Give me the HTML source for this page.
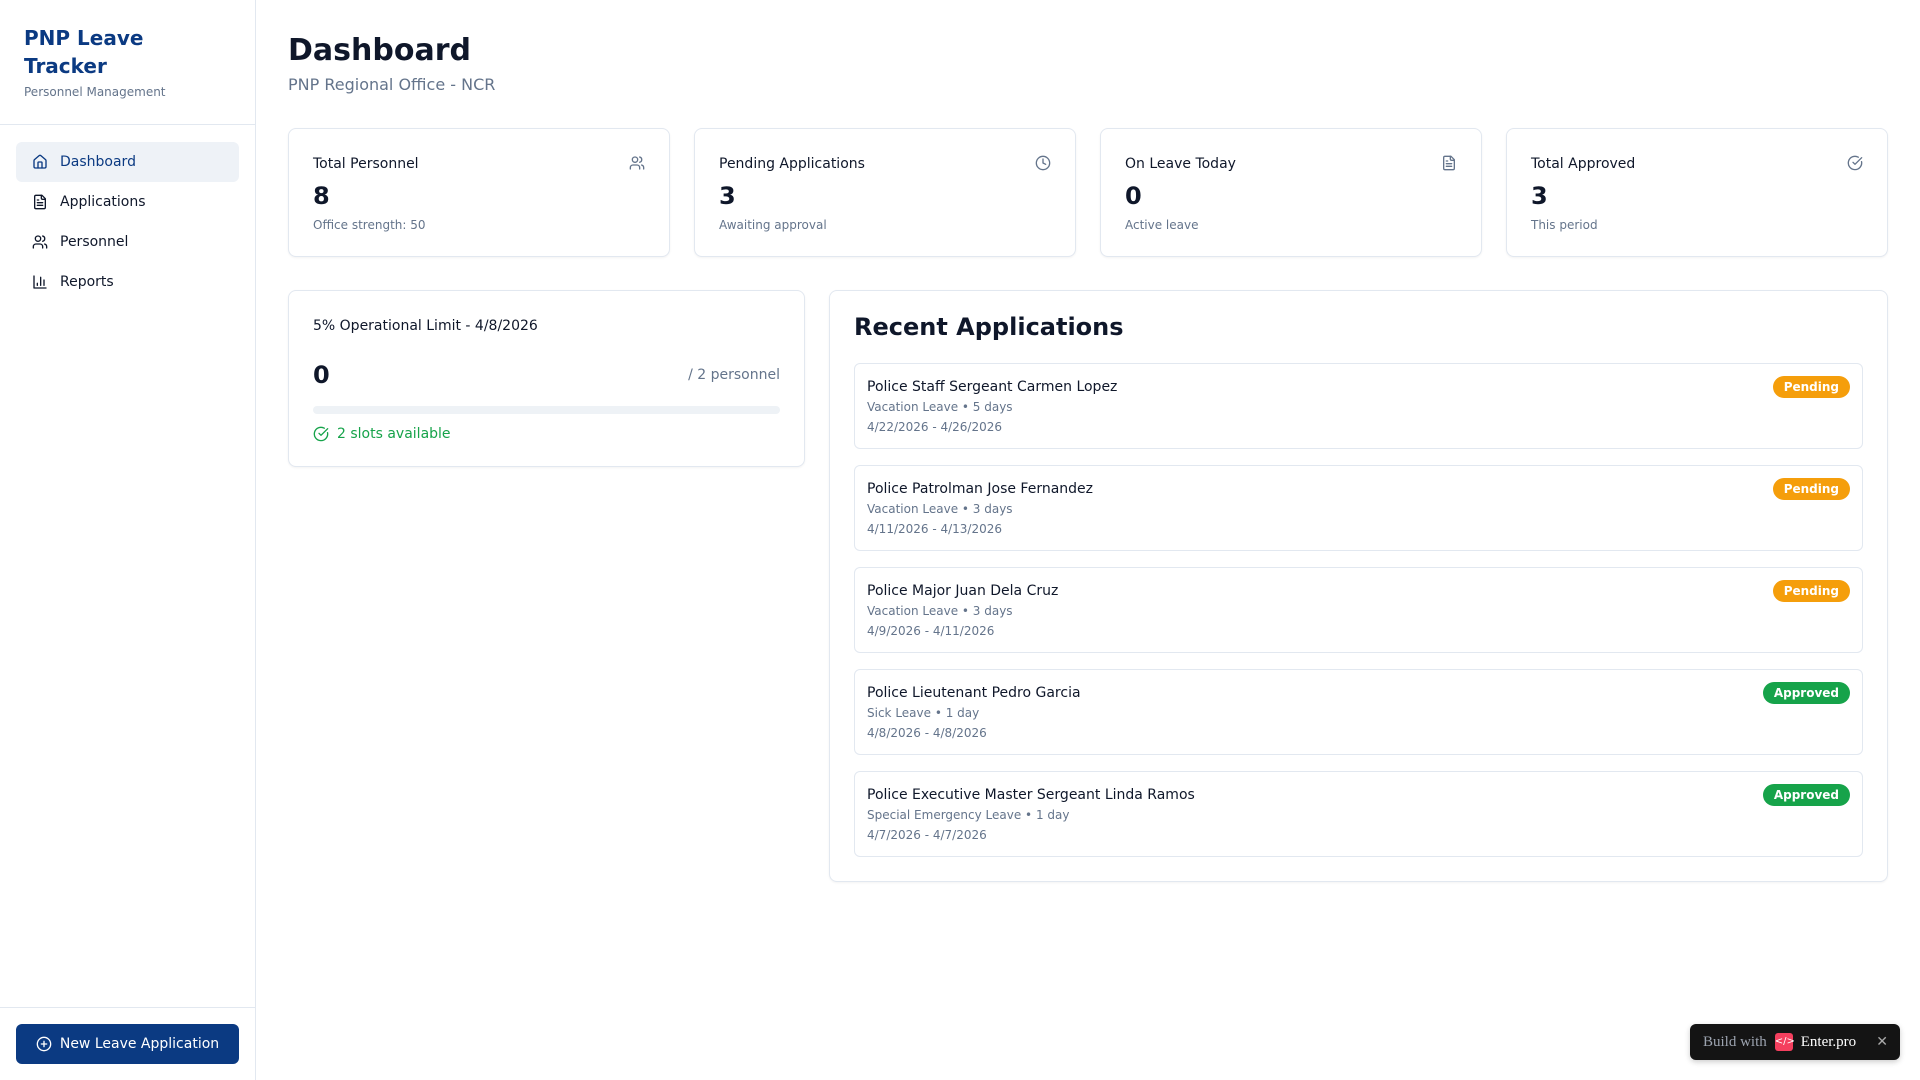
<!DOCTYPE html>
<html><head><meta charset="utf-8"><style>
*{box-sizing:border-box;margin:0;padding:0}
body{width:1920px;height:1080px;font-family:"DejaVu Sans","Liberation Sans",sans-serif;background:#fff;color:#0f172a;position:relative;overflow:hidden}
.side{position:absolute;left:0;top:0;width:256px;height:1080px;border-right:1px solid #e2e8f0}
.brand{padding:24px 24px 0;height:125px;border-bottom:1px solid #e2e8f0}
.brand h1{font-size:20px;line-height:28px;color:#0b3a82;font-weight:bold}
.brand p{font-size:12px;color:#64748b;margin-top:5px}
.nav{padding:16px;padding-top:17px}
.nav a{display:flex;align-items:center;height:40px;padding:0 16px;font-size:14px;color:#0f172a;border-radius:6px;gap:12px;text-decoration:none}
.nav a.act{background:#eef2f7;color:#0b3a82}
.nav svg{width:16px;height:16px;fill:none;stroke:currentColor;stroke-width:2;stroke-linecap:round;stroke-linejoin:round}
.bot{position:absolute;left:0;right:0;top:1007px;border-top:1px solid #e2e8f0;padding:16px}
.btn{height:40px;background:#0b3a82;color:#fff;border-radius:6px;display:flex;align-items:center;justify-content:center;gap:8px;font-size:14px}
.main{position:absolute;left:288px;top:0;width:1600px}
h2{font-size:30px;font-weight:bold;margin-top:32px;line-height:38px}
.sub{font-size:16px;color:#64748b;margin-top:5px}
.stats{display:grid;grid-template-columns:repeat(4,1fr);gap:24px;margin-top:34px}
.card{border:1px solid #e2e8f0;border-radius:8px;box-shadow:0 1px 2px rgba(0,0,0,.05);background:#fff}
.stat{height:129px;padding:24px;position:relative}
.stat .t{font-size:14px;margin-top:3px}
.stat .v{font-size:24px;font-weight:bold;margin-top:8px;line-height:32px}
.stat .s{font-size:12px;color:#64748b;margin-top:6px}
.stat svg{position:absolute;right:24px;top:26px;width:16px;height:16px;fill:none;stroke:#64748b;stroke-width:2;stroke-linecap:round;stroke-linejoin:round}
.row{display:grid;grid-template-columns:517px 1059px;gap:24px;margin-top:33px;align-items:start}
.lim{height:177px;padding:24px}
.lim .t{font-size:14px;margin-top:3px}
.lim .n{display:flex;justify-content:space-between;align-items:center;margin-top:27px}
.lim .n b{font-size:24px}
.lim .n span{font-size:14px;color:#64748b}
.bar{height:8px;background:#eef2f6;border-radius:4px;margin-top:17px}
.ok{color:#16a34a;font-size:14px;margin-top:12px;display:flex;align-items:center;gap:8px}
.rec{padding:20px 24px 24px;height:592px}
.rec h3{font-size:24px;font-weight:bold;line-height:32px}
.item{border:1px solid #e2e8f0;border-radius:6px;height:86px;margin-top:16px;padding:13px 12px;position:relative}
.rec h3+.item{margin-top:20px}
.item .nm{font-size:14px;line-height:20px}
.item .d{font-size:12px;color:#64748b;line-height:20px}
.bd{position:absolute;right:12px;top:12px;height:22px;border-radius:11px;color:#fff;font-size:12px;font-weight:bold;padding:0 11px;line-height:22px}
.p{background:#f59e0b}.a{background:#16a34a}
.ent{position:absolute;left:1690px;top:1024px;width:210px;height:36px;background:#141414;border-radius:6px;display:flex;align-items:center;font-family:"Liberation Serif",serif;font-size:15px;padding-left:13px;box-shadow:0 2px 6px rgba(0,0,0,.2)}
</style></head><body>
<div class="side">
<div class="brand"><h1>PNP Leave<br>Tracker</h1><p>Personnel Management</p></div>
<div class="nav">
<a class="act"><svg viewBox="0 0 24 24"><path d="M15 21v-8a1 1 0 0 0-1-1h-4a1 1 0 0 0-1 1v8"/><path d="M3 10a2 2 0 0 1 .7-1.5l7-6a2 2 0 0 1 2.6 0l7 6A2 2 0 0 1 21 10v9a2 2 0 0 1-2 2H5a2 2 0 0 1-2-2z"/></svg>Dashboard</a>
<a><svg viewBox="0 0 24 24"><path d="M15 2H6a2 2 0 0 0-2 2v16a2 2 0 0 0 2 2h12a2 2 0 0 0 2-2V7z"/><path d="M14 2v4a2 2 0 0 0 2 2h4M10 9H8M16 13H8M16 17H8"/></svg>Applications</a>
<a><svg viewBox="0 0 24 24"><path d="M16 21v-2a4 4 0 0 0-4-4H6a4 4 0 0 0-4 4v2"/><circle cx="9" cy="7" r="4"/><path d="M22 21v-2a4 4 0 0 0-3-3.9M16 3.1a4 4 0 0 1 0 7.8"/></svg>Personnel</a>
<a><svg viewBox="0 0 24 24"><path d="M3 3v18h18M18 17V9M13 17V5M8 17v-3"/></svg>Reports</a>
</div>
<div class="bot"><div class="btn"><svg viewBox="0 0 24 24" width="16" height="16" fill="none" stroke="#fff" stroke-width="2" stroke-linecap="round"><circle cx="12" cy="12" r="10"/><path d="M8 12h8M12 8v8"/></svg>New Leave Application</div></div>
</div>
<div class="main">
<h2>Dashboard</h2>
<div class="sub">PNP Regional Office - NCR</div>
<div class="stats">
<div class="card stat"><div class="t">Total Personnel</div><div class="v">8</div><div class="s">Office strength: 50</div><svg viewBox="0 0 24 24"><path d="M16 21v-2a4 4 0 0 0-4-4H6a4 4 0 0 0-4 4v2"/><circle cx="9" cy="7" r="4"/><path d="M22 21v-2a4 4 0 0 0-3-3.9M16 3.1a4 4 0 0 1 0 7.8"/></svg></div>
<div class="card stat"><div class="t">Pending Applications</div><div class="v">3</div><div class="s">Awaiting approval</div><svg viewBox="0 0 24 24"><circle cx="12" cy="12" r="10"/><path d="M12 6v6l4 2"/></svg></div>
<div class="card stat"><div class="t">On Leave Today</div><div class="v">0</div><div class="s">Active leave</div><svg viewBox="0 0 24 24"><path d="M15 2H6a2 2 0 0 0-2 2v16a2 2 0 0 0 2 2h12a2 2 0 0 0 2-2V7z"/><path d="M14 2v4a2 2 0 0 0 2 2h4M10 9H8M16 13H8M16 17H8"/></svg></div>
<div class="card stat"><div class="t">Total Approved</div><div class="v">3</div><div class="s">This period</div><svg viewBox="0 0 24 24"><path d="M21.8 10A10 10 0 1 1 17 3.3"/><path d="m9 11 3 3L22 4"/></svg></div>
</div>
<div class="row">
<div class="card lim"><div class="t">5% Operational Limit - 4/8/2026</div>
<div class="n"><b>0</b><span>/ 2 personnel</span></div>
<div class="bar"></div>
<div class="ok"><svg viewBox="0 0 24 24" width="16" height="16" fill="none" stroke="#16a34a" stroke-width="2" stroke-linecap="round" stroke-linejoin="round"><path d="M21.8 10A10 10 0 1 1 17 3.3"/><path d="m9 11 3 3L22 4"/></svg>2 slots available</div></div>
<div class="card rec"><h3>Recent Applications</h3>
<div class="item"><div class="nm">Police Staff Sergeant Carmen Lopez</div><div class="d">Vacation Leave • 5 days</div><div class="d">4/22/2026 - 4/26/2026</div><span class="bd p">Pending</span></div>
<div class="item"><div class="nm">Police Patrolman Jose Fernandez</div><div class="d">Vacation Leave • 3 days</div><div class="d">4/11/2026 - 4/13/2026</div><span class="bd p">Pending</span></div>
<div class="item"><div class="nm">Police Major Juan Dela Cruz</div><div class="d">Vacation Leave • 3 days</div><div class="d">4/9/2026 - 4/11/2026</div><span class="bd p">Pending</span></div>
<div class="item"><div class="nm">Police Lieutenant Pedro Garcia</div><div class="d">Sick Leave • 1 day</div><div class="d">4/8/2026 - 4/8/2026</div><span class="bd a">Approved</span></div>
<div class="item"><div class="nm">Police Executive Master Sergeant Linda Ramos</div><div class="d">Special Emergency Leave • 1 day</div><div class="d">4/7/2026 - 4/7/2026</div><span class="bd a">Approved</span></div>
</div>
</div>
</div>
<div class="ent"><span style="color:#9ca3af">Build with</span><span style="display:inline-block;width:18px;height:18px;background:#f43f5e;border-radius:3px;margin:0 8px 0 8px;color:#fff;font-size:10px;text-align:center;line-height:18px;font-family:'DejaVu Sans'">&lt;/&gt;</span><span style="color:#fff">Enter.pro</span><span style="color:#aaa;margin-left:auto;margin-right:12px;font-family:'DejaVu Sans';font-size:14px">✕</span></div>
</body></html>
